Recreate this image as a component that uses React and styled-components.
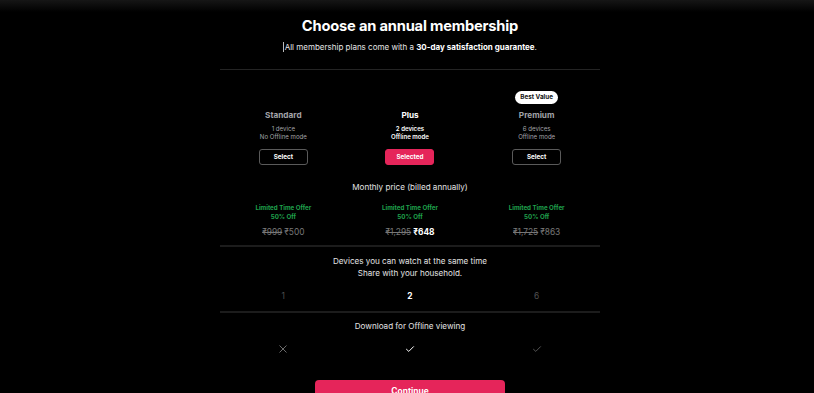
import React from "react";
import styled, { createGlobalStyle, css } from "styled-components";

const Global = createGlobalStyle`
  html, body { margin: 0; padding: 0; background: #000; }
  body { font-family: Inter, "Noto Sans", Arial, sans-serif; color: #fff; -webkit-font-smoothing: antialiased; }
`;

const Page = styled.div`
  height: 393px;
  background: #000;
  overflow: hidden;
`;

const TopShade = styled.div`
  height: 12px;
  background: linear-gradient(#161616, #000);
`;

const Main = styled.main`
  width: 380px;
  margin: 0 auto;
  padding-left: 6px;
  display: flex;
  flex-direction: column;
  align-items: stretch;
`;

const Title = styled.h1`
  margin: 4px 0 0;
  font-size: 14.7px;
  line-height: 20px;
  font-weight: 700;
  text-align: center;
  letter-spacing: -0.2px;
`;

const Subtitle = styled.p`
  margin: 5px 0 0;
  font-size: 8px;
  line-height: 12px;
  text-align: center;
  color: #e6e6e6;
  strong { font-weight: 700; color: #fff; }
`;

const Caret = styled.span`
  display: inline-block;
  width: 1px;
  height: 10px;
  background: #bbb;
  vertical-align: -2px;
  margin-right: 0.5px;
`;

const Divider = styled.hr`
  border: 0;
  margin: ${(p) => p.$mt || 0}px 0 0;
  height: ${(p) => p.$h || 1}px;
  background: ${(p) => p.$c || "#1f1f1f"};
`;

const Grid = styled.div`
  display: grid;
  grid-template-columns: repeat(3, 1fr);
  margin-top: ${(p) => p.$mt || 0}px;
`;

const Plan = styled.div`
  display: flex;
  flex-direction: column;
  align-items: center;
`;

const BadgeSlot = styled.div`
  height: 13px;
  display: flex;
  align-items: center;
  justify-content: center;
`;

const Badge = styled.span`
  background: #fff;
  color: #111;
  font-size: 6.3px;
  font-weight: 700;
  line-height: 13px;
  height: 13px;
  padding: 0 5px;
  border-radius: 7px;
`;

const PlanName = styled.div`
  margin-top: 5px;
  font-size: 8.2px;
  line-height: 12px;
  font-weight: 700;
  color: ${(p) => (p.$active ? "#fff" : "#a2a3a8")};
`;

const PlanInfo = styled.div`
  margin-top: 4px;
  font-size: 6.1px;
  line-height: 8px;
  text-align: center;
  color: ${(p) => (p.$active ? "#fff" : "#a2a3a8")};
  font-weight: ${(p) => (p.$active ? 600 : 400)};
`;

const SelectButton = styled.button`
  margin-top: 8px;
  width: 49px;
  height: 16px;
  border-radius: 3px;
  font-family: inherit;
  font-size: 6.3px;
  font-weight: 700;
  color: #fff;
  padding: 0;
  cursor: pointer;
  ${(p) =>
    p.$selected
      ? css`
          background: #e5255a;
          border: 1px solid #e5255a;
        `
      : css`
          background: #000;
          border: 1px solid #5a5a5a;
        `}
`;

const SectionTitle = styled.div`
  margin-top: ${(p) => p.$mt || 0}px;
  font-size: 8.1px;
  line-height: 12px;
  text-align: center;
  color: #e3e3e3;
`;

const Cell = styled.div`
  display: flex;
  flex-direction: column;
  align-items: center;
`;

const Offer = styled.div`
  font-size: 6.2px;
  line-height: 9px;
  font-weight: 700;
  color: #1fa14c;
  text-align: center;
`;

const Price = styled.div`
  margin-top: 4.5px;
  font-size: 8.4px;
  line-height: 12px;
  color: ${(p) => (p.$active ? "#fff" : "#777")};
  s { color: #777; margin-right: 2px; }
  b { font-weight: ${(p) => (p.$active ? 700 : 400)}; }
`;

const Count = styled.div`
  text-align: center;
  font-size: 8.4px;
  line-height: 12px;
  font-weight: ${(p) => (p.$active ? 700 : 400)};
  color: ${(p) => (p.$active ? "#fff" : "#4f4f4f")};
`;

const IconCell = styled.div`
  display: flex;
  justify-content: center;
  height: 10px;
  color: ${(p) => p.$color};
`;

const Continue = styled.button`
  margin: 26px auto 0;
  width: 190px;
  height: 34px;
  border: 0;
  border-radius: 4px;
  background: #e5255a;
  color: #fff;
  font-family: inherit;
  font-size: 8.4px;
  font-weight: 700;
  padding: 5px 0 0;
  display: flex;
  align-items: flex-start;
  justify-content: center;
  line-height: 12px;
`;

const Cross = () => (
  <svg width="10" height="10" viewBox="0 0 10 10" fill="none" stroke="currentColor" strokeWidth="0.9">
    <path d="M1.5 1.5 L8.5 8.5 M8.5 1.5 L1.5 8.5" />
  </svg>
);

const Check = () => (
  <svg width="10" height="10" viewBox="0 0 10 10" fill="none" stroke="currentColor" strokeWidth="1">
    <path d="M1.2 5 L3.8 7.4 L8.8 2.4" />
  </svg>
);

const plans = [
  { name: "Standard", info: ["1 device", "No Offline mode"], was: "₹999", now: "₹500", devices: "1" },
  { name: "Plus", info: ["2 devices", "Offline mode"], was: "₹1,295", now: "₹648", devices: "2", active: true },
  { name: "Premium", info: ["6 devices", "Offline mode"], was: "₹1,725", now: "₹863", devices: "6", badge: "Best Value" },
];

export default function App() {
  return (
    <Page>
      <Global />
      <TopShade />
      <Main>
        <Title>Choose an annual membership</Title>
        <Subtitle>
          <Caret />All membership plans come with a <strong>30-day satisfaction guarantee</strong>.
        </Subtitle>
        <Divider $mt={16} $h={1} $c="#242424" />
        <Grid $mt={21}>
          {plans.map((p) => (
            <Plan key={p.name}>
              <BadgeSlot>{p.badge && <Badge>{p.badge}</Badge>}</BadgeSlot>
              <PlanName $active={p.active}>{p.name}</PlanName>
              <PlanInfo $active={p.active}>
                {p.info[0]}
                <br />
                {p.info[1]}
              </PlanInfo>
              <SelectButton $selected={p.active}>{p.active ? "Selected" : "Select"}</SelectButton>
            </Plan>
          ))}
        </Grid>
        <SectionTitle $mt={16}>Monthly price (billed annually)</SectionTitle>
        <Grid $mt={10}>
          {plans.map((p) => (
            <Cell key={p.name}>
              <Offer>
                Limited Time Offer
                <br />
                50% Off
              </Offer>
              <Price $active={p.active}>
                <s>{p.was}</s>
                <b>{p.now}</b>
              </Price>
            </Cell>
          ))}
        </Grid>
        <Divider $mt={7} $h={2} $c="#1c1c1c" />
        <SectionTitle $mt={8}>
          Devices you can watch at the same time
          <br />
          Share with your household.
        </SectionTitle>
        <Grid $mt={11}>
          {plans.map((p) => (
            <Count key={p.name} $active={p.active}>
              {p.devices}
            </Count>
          ))}
        </Grid>
        <Divider $mt={9} $h={2} $c="#1c1c1c" />
        <SectionTitle $mt={7}>Download for Offline viewing</SectionTitle>
        <Grid $mt={12}>
          <IconCell $color="#777">
            <Cross />
          </IconCell>
          <IconCell $color="#fff">
            <Check />
          </IconCell>
          <IconCell $color="#555">
            <Check />
          </IconCell>
        </Grid>
        <Continue>Continue</Continue>
      </Main>
    </Page>
  );
}
